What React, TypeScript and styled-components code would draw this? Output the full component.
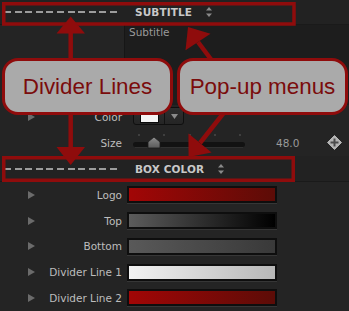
import styled, { createGlobalStyle } from 'styled-components'

const GlobalStyle = createGlobalStyle`
  html, body {
    margin: 0;
    padding: 0;
    background: #242424;
  }

  body {
    font-family: 'DejaVu Sans', sans-serif;
  }
`

const RED = '#8f0c0c'

const Panel = styled.div`
  position: relative;
  width: 349px;
  height: 311px;
  overflow: hidden;
  background: #242424;
  display: flex;
  flex-direction: column;
`

const SectionHeader = styled.div<{ $h: number }>`
  display: flex;
  align-items: center;
  flex-shrink: 0;
  height: ${({ $h }) => $h}px;
  box-sizing: border-box;
  background: #222;
  border-bottom: 1px solid #1a1a1a;
`

const Dashes = styled.div`
  width: 116px;
  height: 2px;
  margin-left: 4px;
  background: repeating-linear-gradient(to right, #9c9c9c 0 7px, transparent 7px 10.6px);
`

const Title = styled.div`
  margin-left: 15px;
  font-size: 10.5px;
  font-weight: bold;
  color: #c8c8c8;
  letter-spacing: .1px;
`

const Stepper = styled.svg`
  margin-left: 14px;
`

const TextRow = styled.div`
  display: flex;
  flex-shrink: 0;
  height: 80px;
`

const TextGutter = styled.div`
  width: 124px;
  flex-shrink: 0;
`

const TextBox = styled.div`
  flex: 1;
  background: #1d1d1d;
  border-left: 1px solid #161616;
  padding: 1px 0 0 4px;
  font-size: 10.5px;
  color: #9a9a9a;
`

const Row = styled.div<{ $h?: number }>`
  display: flex;
  align-items: center;
  flex-shrink: 0;
  height: ${({ $h }) => $h ?? 25.75}px;
  padding-left: 28px;
`

const Disclosure = styled.svg<{ $hidden?: boolean }>`
  flex-shrink: 0;
  visibility: ${({ $hidden }) => $hidden ? 'hidden' : 'visible'};
`

const Label = styled.div`
  width: 87px;
  flex-shrink: 0;
  text-align: right;
  font-size: 10.5px;
  color: #bdbdbd;
  white-space: nowrap;
`

const Swatch = styled.div<{ $from: string, $to: string }>`
  width: 150px;
  height: 17px;
  margin-left: 5px;
  box-sizing: border-box;
  border: 2px solid #0e0e0e;
  background: linear-gradient(to right, ${({ $from }) => $from}, ${({ $to }) => $to});
  box-shadow: 0 1px 0 #363636;
`

const ColorButton = styled.div`
  display: flex;
  align-self: flex-start;
  margin: 2px 0 0 11px;
  width: 51px;
  height: 18px;
  box-sizing: border-box;
  border: 1px solid #0f0f0f;
  border-radius: 3px;
  overflow: hidden;
  background: linear-gradient(#2e2e2e, #252525);

  & .chip {
    display: flex;
    align-items: center;
    justify-content: center;
    width: 30px;
  }

  & .chip span {
    width: 17px;
    height: 11px;
    background: #f4f4f4;
    outline: 1px solid #0a0a0a;
  }

  & .drop {
    flex: 1;
    display: flex;
    align-items: center;
    justify-content: center;
    border-left: 1px solid #121212;
  }
`

const Slider = styled.svg`
  margin-left: 11px;
  flex-shrink: 0;
`

const Value = styled.div`
  margin-left: 31px;
  font-size: 10.5px;
  color: #9a9a9a;
`

const MoveIcon = styled.svg`
  margin-left: auto;
  margin-right: 7px;
`

const Overlay = styled.svg`
  position: absolute;
  left: 0;
  top: 0;
  pointer-events: none;
  z-index: 1;
`

const Callout = styled.div<{ $left: number }>`
  position: absolute;
  top: 58px;
  left: ${({ $left }) => $left}px;
  width: 171px;
  height: 57px;
  box-sizing: border-box;
  border: 3.5px solid ${RED};
  border-radius: 16px;
  background: #aaa;
  z-index: 2;
  display: flex;
  align-items: center;
  justify-content: center;
  font-family: 'Liberation Sans', Arial, sans-serif;
  font-size: 22.4px;
  color: #7a0c0c;
  white-space: nowrap;
`

const swatches = [
  { label: 'Logo', from: '#a20606', to: '#5c0c07' },
  { label: 'Top', from: '#5c5c5c', to: '#000000' },
  { label: 'Bottom', from: '#595959', to: '#393939' },
  { label: 'Divider Line 1', from: '#f2f2f2', to: '#b7b7b7' },
  { label: 'Divider Line 2', from: '#a20606', to: '#5c0c07' },
]

function Arrows() {
  return (
    <Stepper width='6' height='10' viewBox='0 0 6 10'>
      <path d='M3 0L6 3.6H0Z M3 10L6 6.4H0Z' fill='#8a8a8a' />
    </Stepper>
  )
}

function Triangle({ hidden }: { hidden?: boolean }) {
  return (
    <Disclosure $hidden={hidden} width='7' height='8' viewBox='0 0 7 8'>
      <path d='M0 0L7 4L0 8Z' fill='#6b6b6b' />
    </Disclosure>
  )
}

export default function App() {
  return (
    <Panel>
      <GlobalStyle />

      <SectionHeader $h={25}>
        <Dashes />
        <Title>SUBTITLE</Title>
        <Arrows />
      </SectionHeader>

      <TextRow>
        <TextGutter />
        <TextBox>Subtitle</TextBox>
      </TextRow>

      <Row $h={24}>
        <Triangle />
        <Label>Color</Label>
        <ColorButton>
          <div className='chip'><span /></div>
          <div className='drop'>
            <svg width='7' height='5' viewBox='0 0 7 5'>
              <path d='M0 0H7L3.5 5Z' fill='#8c8c8c' />
            </svg>
          </div>
        </ColorButton>
      </Row>

      <Row $h={27}>
        <Triangle hidden />
        <Label>Size</Label>
        <Slider width='112' height='22' viewBox='0 0 112 22'>
          <defs>
            <linearGradient id='thumb' x1='0' y1='0' x2='0' y2='1'>
              <stop offset='0' stopColor='#8e8e8e' />
              <stop offset='1' stopColor='#5a5a5a' />
            </linearGradient>
          </defs>
          {[6, 31, 57, 82, 107].map(x => (
            <rect key={x} x={x - .5} y='2' width='1' height='2' fill='#5a5a5a' />
          ))}
          <rect x='0' y='10' width='112' height='5' rx='2.5' fill='#121212' />
          <rect x='2' y='15' width='108' height='1' fill='#303030' />
          <path d='M21 5L27 10V16H15V10Z' fill='url(#thumb)' stroke='#1c1c1c' strokeWidth='.8' />
        </Slider>
        <Value>48.0</Value>
        <MoveIcon width='15' height='15' viewBox='0 0 15 15'>
          <path d='M7.5 .5L14.5 7.5L7.5 14.5L.5 7.5Z' fill='#b4b4b4' stroke='#b4b4b4' strokeLinejoin='round' />
          <path d='M7.5 3.5V11.5M3.5 7.5H11.5' stroke='#4c4c4c' strokeWidth='2' />
        </MoveIcon>
      </Row>

      <SectionHeader $h={26}>
        <Dashes />
        <Title>BOX COLOR</Title>
        <Arrows />
      </SectionHeader>

      {swatches.map(({ label, from, to }) => (
        <Row key={label}>
          <Triangle />
          <Label>{label}</Label>
          <Swatch $from={from} $to={to} />
        </Row>
      ))}

      <Overlay width='349' height='311' viewBox='0 0 349 311'>
        <g fill='none' stroke={RED} strokeWidth='3.5'>
          <rect x='3.75' y='3.75' width='290.25' height='20.25' />
          <rect x='3.75' y='157.75' width='289.5' height='22.5' />
        </g>
        <g stroke={RED} strokeWidth='4.5'>
          <line x1='70.7' y1='30' x2='70.7' y2='62' />
          <line x1='70.7' y1='110' x2='70.7' y2='149' />
          <line x1='198' y1='42' x2='216' y2='66' />
          <line x1='200' y1='143' x2='226' y2='110' />
        </g>
        <g fill={RED}>
          <path d='M70.7 16.5L85 33.5H56.5Z' />
          <path d='M56.5 147H85L70.7 165Z' />
          <path d='M188 27L210.5 33.7L185.5 50.3Z' />
          <path d='M188.6 157L211.6 152.5L188.4 133.5Z' />
        </g>
      </Overlay>

      <Callout $left={2}>Divider Lines</Callout>
      <Callout $left={177}>Pop-up menus</Callout>
    </Panel>
  )
}
